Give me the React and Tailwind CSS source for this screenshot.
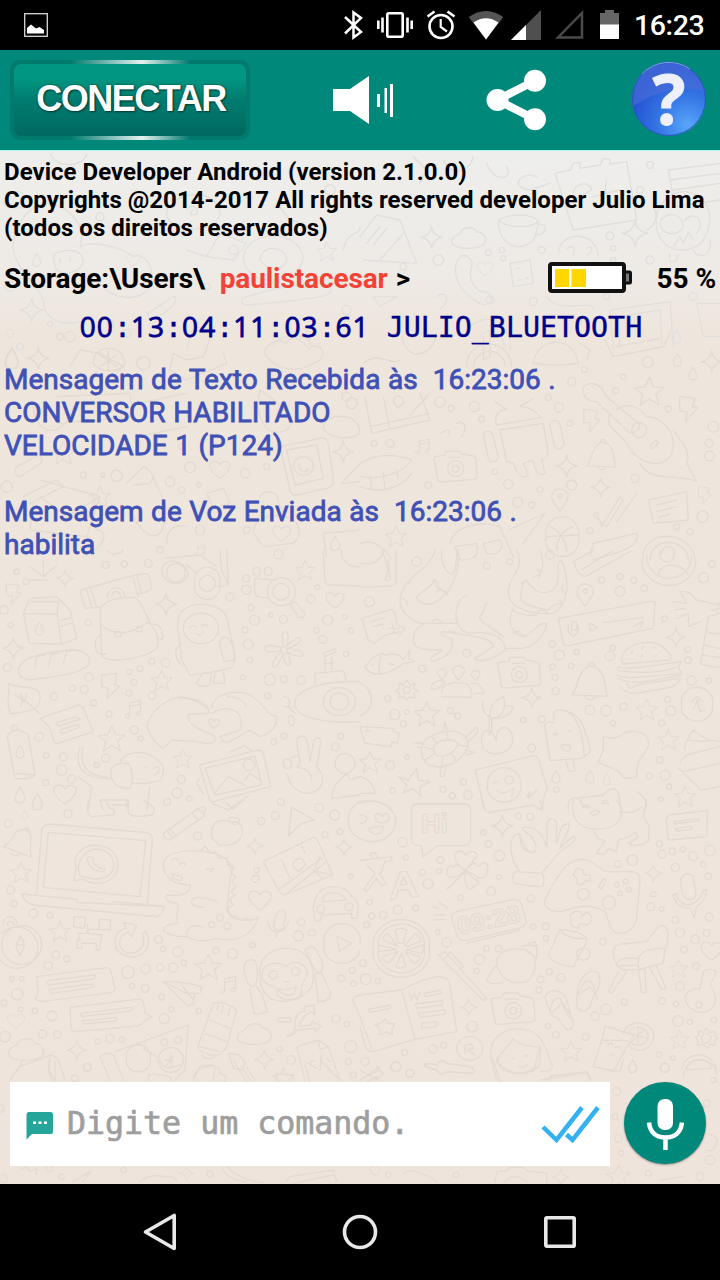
const STAR = 'M0-40L12-13L40-12L18 7L27 36L0 20L-25 37L-18 8L-40-10L-12-13Z'
const SPARK = 'M0-32Q3-5 32 0Q5 4 0 32Q-4 5-32 0Q-4-4 0-32Z'
const HEART = 'M0 30C-20 16-36 2-34-14C-30-32-6-30 0-14C8-32 34-28 34-10C32 6 16 18 0 30Z'
const CLOUD = 'M-50 14C-50-6-36-8-26-14C-18-38 20-36 26-18C50-20 56 6 48 16C30 34-34 36-50 14Z'
const DROP = 'M0-24C12-6 16 2 15 12C12 28-12 28-15 12C-16 2-10-8 0-24Z'
const BOLT = 'M-26-36L20-30L12-4L28-2L-8 40L-4 10L-26 8Z'
const NOTE = 'M-12 22V-18L24-26V14M-12-6L24-14M-12 22C-20 12-32 24-24 30C-18 32-12 28-12 22M24 14C16 6 4 16 12 22C18 24 24 20 24 14'
const CAMERA = 'M-62-30L-34-34L-28-46H14L20-38L54-32Q60-30 60-22L64 28Q64 36 56 38L-44 46Q-52 46-54 38L-64-20Q-66-28-62-30ZM24 6A24 24 0 1 1-24 6A24 24 0 1 1 24 6M10 6A10 10 0 1 1-10 6A10 10 0 1 1 10 6M-22-28H14'
const BELL = 'M-50 36C-30 16-36-30 0-42C36-44 40-4 46 40L-50 36ZM-14 40C-8 52 10 52 14 40M-4-44A8 8 0 1 1 12-44'
const PIN = 'M0 34C-20 8-30-4-22-22C-12-38 16-36 24-18C28-2 14 10 0 34ZM6-12A6 6 0 1 1-6-12A6 6 0 1 1 6-12'

// Each tile is a 360px wide piece of the wallpaper, drawn at 3 units per pixel.
const TILES = [
  {
    x: 0, y: 150,
    paths: [
      'M150 10C170 60 250 50 260 12M50 330C20 280 60 180 130 160C210 160 260 230 240 290C280 270 360 290 400 320C450 300 480 400 430 430C380 460 320 430 300 400',
      'M50 330C70 380 110 400 130 450C130 500 170 530 240 515',
      'M160 320C160 300 240 290 245 320C270 360 180 390 165 350ZM180 325V340M210 320V335',
      'M500 200C490 130 650 100 660 190C660 240 530 260 500 200ZM560 180C570 160 600 170 590 190C575 200 565 190 580 180',
      'M560 300L620 320L660 250L740 280L700 330L620 320M730 330C730 240 890 230 910 320C900 410 750 420 730 330ZM780 325C790 280 860 290 860 330C850 370 790 360 780 325Z',
      'M740 440C780 430 820 410 960 400C1000 400 1010 430 960 440C880 455 810 460 740 465C720 465 720 445 740 440Z',
      'M1030 300C1040 240 1080 260 1080 230M440 490C470 480 520 430 525 440C535 460 490 500 450 505ZM840 170C880 240 900 200 920 230',
      'M560 600C580 530 570 520 640 540M820 590C850 540 900 560 930 600M840 570L820 520M870 560L870 510M900 570L930 530',
    ],
    marks: [[STAR, 980, 305, 0.75], [SPARK, 95, 480, 1.1], [HEART, 400, 330, 0.6], [CLOUD, 50, 150, 0.8], [DROP, 110, 330, 0.8]],
    dots: [[30, 410, 14], [60, 590, 10], [150, 522, 8], [30, 550, 12], [330, 520, 10], [700, 300, 14], [700, 70, 10], [480, 380, 10], [300, 200, 12], [210, 560, 16], [990, 120, 16], [380, 550, 12], [620, 410, 10], [1040, 480, 14]],
  },
  {
    x: 360, y: 150,
    paths: [
      'M0 260L50 195L120 210L170 340L10 330M20 280L60 230M40 285L80 235M60 330L130 250',
      'M415 210C450 190 520 190 535 215C530 260 520 290 470 290C430 280 415 250 415 210ZM535 225C560 215 570 250 530 255M415 210C440 235 510 235 535 215',
      'M585 70L630 60L640 40L660 38V55L720 45L730 25L750 28V42L800 35L830 210L640 240ZM640 130C640 100 690 90 695 120L640 150M740 90L730 150M700 140L780 120',
      'M925 60L1080 40M930 90L1080 70M940 120L1080 100M925 60L945 170L1080 150',
      'M890 230C880 160 940 110 1000 130C1060 160 1060 220 1030 270C990 320 900 310 890 230ZM900 215C920 180 970 190 970 230C960 260 900 260 900 215ZM975 210C1000 180 1040 210 1010 250M940 290L960 260L970 280L985 245L1000 270',
      'M595 310C600 240 710 240 715 320M620 300C630 280 650 290 640 315M680 295C700 280 700 310 680 315',
      'M300 320C270 360 290 430 370 465C400 460 400 440 380 425C350 430 320 390 335 350C340 325 315 310 300 320Z',
      'M450 340L510 330L520 400L460 410ZM470 355H480M495 385H505M475 390H485M760 600L750 480L930 455L940 590M780 590L775 500L900 480L905 580M1080 460L1010 460L1030 560L1080 560',
      'M40 440L110 440L60 470ZM230 440C250 420 280 440 240 480M380 40C400 100 460 90 440 50M160 20L200 60L180 100M250 30C270 80 330 70 340 20M530 80C490 60 440 110 510 120L570 100',
      'M330 530C390 480 460 520 450 600M360 560C400 520 440 560 430 600M880 170C900 200 880 230 860 240M560 440C600 500 700 440 700 480M930 310C920 350 950 340 955 315M1000 300C1010 330 1060 320 1050 270',
    ],
    marks: [[SPARK, 825, 250, 1.2], [SPARK, 215, 262, 1], [HEART, 375, 355, 0.7], [CLOUD, 325, 265, 1], [DROP, 950, 560, 0.8], [STAR, 640, 520, 0.7]],
    dots: [[235, 330, 16], [130, 350, 10], [385, 308, 9], [425, 300, 8], [430, 325, 8], [545, 300, 10], [750, 258, 12], [760, 295, 8], [870, 45, 10], [840, 120, 10], [390, 450, 12], [760, 330, 8], [1000, 440, 12], [740, 440, 9], [520, 455, 12], [870, 330, 12], [310, 160, 10]],
  },
  {
    x: 0, y: 330,
    paths: [
      'M210 110L240 60L300 70L370 110L350 130M280 100C280 40 370 40 375 100C360 130 300 130 280 100ZM325 60V120M300 75L350 110M300 110L350 75',
      'M640 0L610 80L560 90L520 70L510 120L560 150L680 100L670 70M800 80C780 50 830 20 860 40C870 10 940 10 930 50C980 40 980 90 940 100C900 130 830 120 800 80Z',
      'M50 410L115 375C130 380 130 395 115 405L60 440C45 440 40 420 50 410ZM70 500L170 450L190 470L90 520M100 520L90 600L260 620L300 500L120 450M120 500L200 560L300 500',
      'M840 350L960 325Q980 320 985 340L1000 450Q1000 470 980 475L890 495Q875 500 870 480ZM860 360L950 345L970 445L885 465ZM880 410C880 370 940 370 940 410C935 445 890 445 880 410ZM895 400C900 430 920 430 925 415',
      'M380 460L430 410C450 420 470 440 450 460L400 465M460 440C480 500 510 510 490 590C470 650 420 600 400 560M620 490L670 475L690 520L640 535ZM500 640C500 600 520 580 560 590',
      'M170 200L390 190L400 260L180 280M410 220L560 190M410 320L560 290M100 230C110 330 200 320 220 230M780 180C760 260 800 330 860 300C900 270 840 220 780 180Z',
      'M970 290C970 250 1080 240 1080 310C1060 330 980 330 970 290ZM1025 460L1080 400M1025 460L1080 455M760 610C760 570 800 550 850 560C900 560 910 620 880 640L790 650ZM980 680L970 610L1080 600M250 680C330 640 320 600 290 600',
      'M780 500C790 480 830 480 835 510C830 530 860 540 850 560',
    ],
    marks: [[SPARK, 115, 85, 1], [DROP, 35, 85, 1.3], [HEART, 660, 418, 0.9], [SPARK, 1030, 365, 1], [STAR, 190, 370, 0.9], [STAR, 300, 500, 0.8], [HEART, 845, 610, 0.8], [DROP, 1005, 640, 0.9], [NOTE, 600, 660, 0.6]],
    dots: [[350, 437, 17], [308, 435, 6], [250, 435, 9], [570, 412, 16], [510, 455, 14], [598, 465, 7], [20, 470, 17], [545, 480, 10], [735, 430, 14], [740, 370, 10], [800, 410, 9], [545, 350, 9], [600, 600, 14], [430, 100, 20], [480, 660, 10], [1040, 200, 14], [180, 20, 10], [740, 600, 10], [1055, 220, 17]],
  },
  {
    x: 360, y: 330,
    paths: [
      'M125 20C140 100 220 80 230 10M10 100C60 60 90 110 120 90M320 110C320 20 450 20 455 110M340 110C345 50 430 50 435 105M370 20V90L390 80V10M520 100C530 20 640 10 655 100Q590 110 520 100M660 40L690 60L680 90',
      'M735 30L760 80L910 50L930 10M770 50L900 25M15 200L35 310L210 270L180 190M30 290L210 250M70 200L90 300M150 255L205 195M100 215C100 190 135 195 130 220L115 235Z',
      'M410 285C400 250 420 240 440 238L405 215M540 260C520 235 500 230 480 230L520 205M410 285L545 262M420 300L550 280L565 370Q560 385 545 390L555 430C540 440 525 430 520 390L490 400L505 435C490 450 475 440 460 400L440 395ZM370 310C385 295 400 310 400 320L415 380C410 400 390 400 385 385ZM568 280C580 265 595 270 600 285L612 340C605 365 590 360 583 345Z',
      'M670 190C660 160 700 150 725 175L740 200L835 280C850 290 820 320 805 305L710 215C690 215 675 205 670 190ZM770 240C790 220 830 220 860 260C920 260 960 330 930 380C900 420 830 400 800 340C780 310 730 290 750 250M860 300A22 22 0 1 1 815 300A22 22 0 1 1 860 300M870 345L890 330L895 340L875 358ZM840 400C870 460 960 430 1010 455L980 400C1000 360 940 310 940 300',
      'M0 400C50 370 100 370 155 390C130 430 60 450 0 440M0 470C50 490 120 480 155 430M30 440L35 480M70 430L75 480M110 420L115 450',
      'M865 510L980 485L985 570L880 580ZM890 525L950 510M890 545L950 530M895 562L930 552M725 590L780 500L790 510L740 590L700 555L710 545ZM770 575L830 490',
      'M558 620A50 50 0 1 1 656 620A50 50 0 1 1 558 620M570 590C600 600 620 640 620 665M640 590C600 600 590 640 590 660M560 620L655 615M690 680L700 640L830 610C840 630 820 650 780 665L700 690M850 690C840 590 1000 600 1005 690M870 690C870 620 980 620 985 690M905 670A20 20 0 1 1 945 670',
      'M270 640C280 590 360 570 420 590L460 680M285 650L350 640C360 680 340 690 300 690ZM370 640L420 630C440 660 400 680 380 670ZM445 600L555 550L490 640M0 640C60 620 100 690 90 690M240 310C260 300 270 290 268 320M290 280C310 270 325 290 305 320',
    ],
    marks: [[STAR, 868, 185, 1.1], [SPARK, 620, 408, 1], [SPARK, 722, 472, 0.9], [BOLT, 695, 270, 0.9], [BOLT, 985, 235, 1], [CAMERA, 287, 410, 1], [NOTE, 188, 348, 0.8], [PIN, 600, 510, 1], [DROP, 952, 90, 0.8], [DROP, 998, 130, 0.8], [BELL, 725, 375, 0.9], [BOLT, 1035, 495, 0.7], [STAR, 108, 620, 0.8], [SPARK, 1055, 95, 1]],
    dots: [[240, 215, 16], [273, 235, 9], [343, 230, 15], [365, 267, 9], [445, 463, 14], [540, 478, 9], [635, 465, 15], [597, 232, 14], [565, 203, 9], [90, 340, 12], [42, 340, 9], [205, 466, 10], [635, 155, 12], [863, 97, 16], [790, 140, 8], [925, 237, 9], [1047, 340, 12], [1048, 378, 15], [1060, 290, 16], [825, 445, 12], [473, 517, 15], [515, 525, 9], [1028, 560, 17], [950, 590, 9], [990, 605, 9], [690, 602, 9], [630, 280, 8], [405, 425, 8], [767, 183, 9], [674, 118, 9]],
  },
  {
    x: 0, y: 550,
    paths: [
      'M70 190L90 145L170 140L210 180L230 265L185 282L88 280ZM90 155H175M70 190L172 192L185 282M172 192L175 150M183 210L212 203M185 228L214 220',
      'M242 120L400 76L438 70Q450 75 455 115Q450 125 415 132M242 120Q245 150 258 175L300 172M258 112L275 172M270 110L290 170M398 78L415 140M410 74L425 128M322 140C325 105 370 105 375 138M335 138C338 120 358 120 362 138',
      'M305 320L300 180C310 150 360 140 405 142C430 160 440 210 470 250C490 300 450 310 420 320C380 330 330 335 305 320ZM305 225C330 250 380 265 445 215M345 245H362V260H345ZM410 230H425V245H410ZM445 220L475 225Q490 240 488 268L470 265M305 255Q280 260 288 300Q300 320 318 310',
      'M55 360C60 320 130 310 200 300C250 295 280 320 265 345C240 375 150 380 90 390C60 385 55 375 55 360ZM105 355L110 320L135 315M145 350L155 312L175 310M190 340L200 305L220 302',
      'M485 60C490 20 550 25 565 70C555 115 490 110 485 60ZM500 68A28 28 0 1 0 556 68A28 28 0 1 0 500 68M585 100A38 38 0 1 1 658 100A38 38 0 1 1 585 100M598 100A24 24 0 1 1 646 100A24 24 0 1 1 598 100M495 25L600 15L650 50M660 0L665 60L685 105L650 110M680 0L685 105M560 45L590 70',
      'M765 85L830 90M770 140L810 145M765 85C760 110 765 130 770 140M802 125A42 42 0 1 1 886 125A42 42 0 1 1 802 125M818 125A25 25 0 1 1 868 125A25 25 0 1 1 818 125M870 165L885 155L915 190C915 205 905 205 895 200Z',
      'M730 80C740 65 755 80 745 95C725 95 725 90 730 80ZM762 55C780 45 785 65 775 80C760 75 755 65 762 55ZM795 55C810 45 825 60 812 75C795 80 790 70 795 55ZM727 110C740 100 760 110 750 130C730 140 720 120 727 110Z',
      'M545 330C540 270 520 200 550 180C590 150 660 160 680 200C690 260 710 300 700 350C650 370 600 370 570 375ZM550 235A53 46 0 1 1 656 235A53 46 0 1 1 550 235M568 235Q580 220 590 232M605 228Q615 218 625 230M588 250Q602 262 610 245M658 280C665 250 690 260 698 290L708 330L672 335ZM545 280C525 290 525 310 532 330L550 350M605 375L590 400Q600 415 630 405L635 370M645 368L640 400L675 400L670 365',
      'M852 290C830 230 880 230 860 290C900 240 930 270 865 295C930 300 920 340 860 305C890 360 850 360 850 310C830 370 790 360 845 302C780 320 770 270 845 293M862 300A10 10 0 1 1 842 300A10 10 0 1 1 862 300',
      'M25 400C60 420 120 400 120 440C120 490 80 480 35 492C15 470 30 440 25 400ZM45 435L85 460L118 490M60 430L70 450L60 470M80 430L75 450',
      'M120 505L235 465Q245 465 250 475L280 545L175 580Q165 580 160 570L148 530ZM168 518L230 500L240 508L175 528ZM180 540L235 523L240 532L185 550Z',
      'M305 375L350 370L345 405L360 408L320 445L325 415L305 410ZM22 560Q25 545 50 540Q75 545 85 555L105 675Q90 690 45 685ZM35 540L38 525L52 528L55 540M48 670L105 675',
      'M440 530C450 480 500 450 540 440C600 450 630 460 625 490L570 492C550 510 590 540 640 555C660 580 630 585 590 575L515 570L490 595Q460 580 440 530ZM635 475C640 430 700 420 740 430C800 460 790 490 830 500C830 530 810 550 780 560L750 540L690 575Q665 580 660 560L720 540C740 480 680 460 635 490M540 445C570 440 600 460 625 475M680 440C710 440 730 450 740 470',
      'M625 515C630 500 640 510 642 515C650 500 665 512 655 525L640 535Z',
      'M885 465C880 430 940 390 1080 395M885 465C890 510 1000 520 1080 515M945 405L945 370L1030 362L1040 395M970 310L1005 295L1008 305L975 320ZM975 325V362M995 320V360M972 340H998M970 455A48 42 0 1 1 1066 455A48 42 0 1 1 970 455M990 455A28 26 0 1 1 1046 455A28 26 0 1 1 990 455M850 440C870 440 875 460 862 470L885 490M850 470H880M865 505C870 480 890 510 880 525C870 530 865 520 865 505',
      'M240 590C220 650 250 690 335 685M250 590C235 640 260 680 320 680M335 685C325 640 350 640 385 640C400 660 400 700 390 715C350 715 340 700 335 685ZM360 640C370 600 440 600 465 625C490 640 500 660 480 690C450 705 410 700 395 700M435 650H442M460 655L475 650L478 665L465 675M235 680L275 710L265 780M450 710L440 780M300 750L310 780M380 745V780M300 750H380',
      'M598 645L775 600Q785 600 790 610L812 710L640 755Q630 755 628 745ZM615 655L765 618L785 705L645 735ZM645 728L685 680L740 708M735 690L750 670L780 690M730 645A17 17 0 1 1 765 645A17 17 0 1 1 730 645M690 605L735 588L755 602M598 685L590 700L610 730M680 760L700 778L745 735',
      'M900 640C895 600 880 560 905 558C925 560 925 590 930 635L940 580C945 555 965 560 962 580L950 650C980 680 970 720 930 730C880 730 870 700 860 670M850 640C840 620 880 620 875 650C860 660 850 655 850 640ZM875 625C900 600 910 640 890 650M890 650C910 660 930 650 935 690',
      'M1005 640A30 30 0 1 1 1065 640A30 30 0 1 1 1005 640M995 745C1000 700 1020 690 1040 670L1050 690L1080 680M995 745L1080 735M970 0L975 90Q975 105 990 105L1080 108M1025 0C1020 30 1050 55 1080 50M320 0Q345 25 370 0M90 50L130 80L170 45M90 90H145M130 30V80',
    ],
    marks: [[SPARK, 195, 85, 0.8], [SPARK, 498, 163, 1], [SPARK, 40, 295, 1], [STAR, 485, 393, 0.8], [STAR, 335, 567, 1], [STAR, 548, 627, 0.75], [STAR, 915, 62, 0.75], [HEART, 1005, 150, 0.8], [HEART, 195, 732, 1], [DROP, 60, 735, 1], [DROP, 112, 755, 1], [DROP, 118, 235, 0.8], [DROP, 60, 605, 0.8], [BOLT, 40, 130, 0.8], [NOTE, 400, 475, 0.9]],
    dots: [[445, 40, 12], [373, 42, 9], [317, 45, 10], [50, 65, 8], [78, 95, 9], [12, 180, 13], [32, 225, 8], [265, 218, 9], [497, 338, 13], [455, 334, 9], [420, 356, 9], [387, 366, 8], [402, 397, 9], [387, 430, 9], [456, 436, 11], [267, 382, 13], [253, 418, 12], [217, 415, 9], [162, 440, 11], [22, 353, 12], [281, 459, 9], [327, 492, 9], [403, 540, 12], [118, 560, 13], [190, 621, 12], [185, 660, 16], [215, 687, 12], [138, 616, 8], [137, 698, 9], [317, 624, 12], [290, 645, 8], [422, 566, 8], [544, 688, 12], [531, 729, 15], [502, 755, 10], [568, 746, 8], [690, 141, 12], [753, 173, 9], [763, 211, 15], [735, 240, 9], [745, 284, 15], [750, 330, 8], [850, 208, 12], [812, 195, 6], [932, 147, 12], [952, 112, 7], [983, 211, 15], [968, 268, 12], [950, 241, 8], [1053, 242, 8], [1035, 200, 7], [1038, 312, 8], [809, 389, 17], [851, 388, 10], [903, 391, 13], [803, 437, 9], [851, 558, 9], [821, 576, 9], [1022, 558, 9], [1006, 590, 12], [842, 755, 10], [836, 12, 14], [728, 382, 7]],
  },
  {
    x: 360, y: 550,
    paths: [
      'M225 0C210 60 150 70 135 110C100 160 130 200 180 220L290 220M295 0C300 60 280 130 220 160C190 170 170 150 170 140L225 95M245 0C240 50 265 75 280 70C290 50 290 20 290 0M135 105L155 95M125 145Q145 150 140 165M215 95Q235 80 230 110L265 135Q240 110 230 125M320 135C280 150 270 240 330 250C400 240 440 270 435 300C400 330 350 340 345 325L400 290C390 255 320 260 260 245C230 240 240 260 275 265C280 300 270 320 215 335C200 320 240 310 245 300C200 300 160 300 160 270C160 230 190 225 190 225M380 155L365 195Q350 200 370 218L430 260M405 240Q420 240 415 265M215 215Q235 200 245 218M255 250Q275 235 290 250',
      'M470 0C500 60 440 80 445 130C450 180 520 195 580 190C640 150 620 70 605 30C580 40 610 90 580 120C540 140 520 120 500 90C480 100 490 120 480 140C490 170 540 175 565 180C590 150 620 170 600 150M540 0C560 60 540 80 520 80M485 100Q500 85 510 105M530 60Q550 65 535 85M530 190Q540 170 565 190M610 105Q595 120 620 130M460 175C440 210 450 250 490 260C540 240 520 220 560 220C560 250 520 290 490 295L435 295M455 180Q490 200 530 195M460 250Q475 235 490 260',
      'M595 205L870 155L885 155L880 235L625 287Q612 287 608 275ZM625 225V245L640 260L655 245V225M635 215H650V240H635ZM688 218L712 232L690 243ZM730 218L850 202M820 230L850 215L840 235',
      'M640 35L700 0M675 80L810 5M640 35L655 70L675 80M665 60L760 0M845 30A80 75 0 0 0 1008 30M860 15A65 65 0 0 0 995 20M895 80C890 40 960 30 985 75M900 0C890 40 940 50 943 10',
      'M940 155L980 160L960 125C990 120 1000 140 1010 150L1080 165M945 180L975 175M950 205L985 190L985 230L1020 215M1055 180L1080 175M1045 200L1080 190M1045 200L1022 340Q1040 350 1080 352M1040 245Q1060 255 1080 250M1030 285L1080 295M1025 315L1080 322M1080 155L1070 185',
      'M785 335C780 290 840 270 890 280C920 295 940 320 930 330L790 342ZM775 350C800 360 850 350 965 335L955 350C900 370 830 370 775 362ZM770 375C800 390 850 380 965 370L955 350M775 385C830 410 880 390 965 375M780 410Q790 430 830 430L930 412Q960 400 960 385M800 400Q810 425 830 405L955 385M815 310L818 300M845 300L850 290M840 320L848 316M880 295L885 290M885 320L890 315',
      'M15 350C30 330 60 300 75 315C100 310 120 310 130 330L150 300L145 325L165 335L130 340C110 360 70 375 50 372Q25 370 15 350ZM70 310Q50 340 60 370M85 340L100 345M35 345H42M5 205L95 178Q100 180 105 190L112 225L135 235L120 255M5 205L25 270L45 280L75 255L120 245M35 215L75 202M40 230L70 222M85 235L120 235M95 220L105 250',
      'M245 430C240 400 290 390 325 405Q340 430 335 442L245 440M278 365C275 345 310 340 315 365Q305 380 295 390Q285 380 278 365ZM232 370A14 14 0 1 1 260 370L245 390ZM333 375A13 13 0 1 1 360 375L347 392ZM215 405Q230 385 255 395Q240 420 215 418ZM335 400Q360 395 372 430L345 430',
      'M140 390L150 405L165 400L160 415L175 422L160 430L165 445L150 440L140 450L130 440L115 445L120 430L105 422L120 415L115 400L130 405ZM150 420A10 10 0 1 1 130 420A10 10 0 1 1 150 420',
      'M370 450C360 480 380 500 400 505C430 500 440 470 430 440C410 450 390 460 390 500M430 470Q450 465 460 470Q455 500 405 505M388 505V555M395 505V550M365 580C360 540 390 520 410 575C400 520 460 520 458 570C455 610 400 625 370 595Z',
      'M185 610C175 560 240 540 290 545C340 560 330 610 280 640C230 660 190 650 185 610ZM220 600C220 570 270 560 295 580C290 610 230 640 220 600ZM260 545L265 570M215 560L230 580M185 590L218 598M325 590L295 585M245 655L248 625M290 635L275 610M195 630L225 610M250 540L255 515L262 542M240 650L242 680H252L258 652M315 565L350 530Q358 540 350 550L325 575M160 578L195 582M170 590L185 595M320 600L345 608L320 615',
      'M555 535C550 520 565 510 580 520C590 500 570 490 590 480C660 480 670 520 692 600C690 610 680 615 665 625L570 632ZM620 482C660 510 670 560 672 620M580 550L592 552L582 558M625 545L635 540M603 585H630Q635 600 620 605Q605 600 603 585ZM618 635L625 660Q635 670 645 660L640 630',
      'M730 560C760 570 780 560 800 545C850 540 870 560 865 590C850 620 830 620 830 680Q800 690 790 680C770 650 740 655 715 635L730 600Z',
      'M345 660L520 617Q530 617 535 627L562 715L548 750V780M345 660L375 780M383 705A50 45 0 1 1 482 705A50 45 0 1 1 383 705M400 700Q410 690 418 700M435 690A12 12 0 1 1 460 690A12 12 0 1 1 435 690M410 720Q430 740 460 715L455 740M500 740L510 725L505 745L530 720',
      'M0 530L100 535V545L118 550L112 580L95 575V590L15 580ZM18 545A5 5 0 1 1 28 545M0 400A45 50 0 0 1 0 497M0 680Q40 690 45 730H0M155 780Q155 765 170 763H320Q330 765 332 780M0 760Q60 740 95 780M0 40Q60 50 70 0M0 112L95 108Q108 105 108 90V0M70 10L85 60L75 90Q90 95 90 85L85 30',
      'M965 463A47 42 0 1 1 1057 463A47 42 0 1 1 965 463M995 455L1010 440L1030 455M1000 480L1012 450L1020 485L1035 480M975 600C970 580 1000 540 1000 540C1020 560 1040 560 1040 570L1080 575M960 640C970 610 1000 610 1080 590M955 655L970 665L1080 640M970 670L1025 720L1080 710M985 570L1040 575',
      'M625 780Q620 740 650 745Q690 740 730 735Q760 700 775 730L785 780M660 750Q670 780 690 770M730 760H745M830 725Q870 750 855 780M115 680L145 690L170 655L175 690L210 695L180 710L182 740L160 715L130 730L140 705Z',
    ],
    marks: [[STAR, 200, 493, 0.95], [SPARK, 515, 443, 0.9], [CAMERA, 478, 368, 1], [PIN, 676, 135, 1], [BELL, 690, 395, 1.1], [STAR, 860, 480, 0.8], [STAR, 925, 570, 0.8], [STAR, 30, 637, 0.8], [STAR, 975, 740, 0.8], [SPARK, 948, 262, 0.9], [DROP, 690, 680, 0.8], [DROP, 740, 688, 0.7], [DROP, 588, 680, 0.8]],
    dots: [[170, 35, 14], [28, 155, 15], [187, 356, 10], [83, 445, 9], [105, 494, 15], [130, 521, 9], [140, 486, 7], [271, 482, 9], [293, 498, 9], [90, 646, 13], [141, 622, 7], [310, 696, 9], [324, 735, 13], [277, 737, 9], [249, 718, 9], [98, 722, 8], [570, 15, 13], [380, 47, 10], [449, 35, 9], [725, 90, 9], [780, 80, 9], [821, 91, 9], [853, 115, 10], [780, 124, 15], [1030, 83, 15], [1056, 41, 10], [577, 281, 10], [598, 315, 15], [578, 350, 8], [633, 348, 8], [585, 382, 9], [587, 423, 11], [545, 508, 10], [515, 594, 12], [490, 510, 8], [750, 318, 14], [758, 293, 8], [690, 480, 14], [738, 482, 16], [791, 470, 11], [759, 520, 8], [932, 482, 15], [905, 519, 9], [923, 448, 9], [983, 298, 9], [985, 331, 10], [995, 392, 14], [1047, 392, 8], [899, 630, 10], [915, 676, 15], [868, 678, 9], [927, 710, 8], [903, 748, 7], [320, 310, 12], [590, 719, 8], [914, 206, 8], [650, 306, 8]],
  },
  {
    x: 0, y: 800,
    paths: [
      'M110 280L125 90Q130 72 150 72L440 98Q458 102 457 118L442 310M130 262L145 97L437 122L420 290ZM65 282L230 298L235 308L335 312L492 320Q490 345 470 350L100 315Q70 305 65 282ZM335 305L490 318',
      'M222 242L228 205C215 160 255 130 300 137C350 145 365 190 345 225C325 255 275 255 250 238ZM240 228C225 190 250 150 290 147C330 150 350 180 338 212C320 245 280 240 240 228M262 175Q270 165 278 175L280 190L300 205L315 205Q315 218 300 215Q262 205 262 175Z',
      'M10 140C50 120 30 90 75 88C110 100 80 140 95 172ZM35 160Q45 172 60 162M70 88Q80 78 90 90',
      'M490 100L595 25L615 20Q620 25 610 50L510 120Q490 118 490 100ZM510 88L530 110M500 92L518 115M575 38L595 60M590 25L612 42',
      'M635 95C640 55 670 60 690 65C730 60 735 100 720 115C700 140 680 135 660 135C640 120 630 110 635 95ZM685 65C685 50 700 48 718 58C718 75 700 78 697 70',
      'M865 108L875 22L942 60L905 70ZM790 185L940 112Q950 112 955 125L998 225L855 285Q845 285 835 270ZM835 270L965 175M855 285L975 188M940 212L998 225M905 135L915 160M845 180L870 235M880 200A18 18 0 1 1 915 195L895 215ZM945 205L960 170M965 235L940 210',
      'M490 195C490 150 580 145 640 160C690 170 700 200 690 240L680 330C690 360 740 370 775 352C760 400 720 430 650 415C600 430 560 420 558 400C570 370 600 375 612 385M490 195C490 230 520 255 572 255C570 280 550 290 500 285Q490 305 530 310C545 320 520 350 535 370C510 370 490 380 490 390C510 410 540 410 560 410M655 310C630 290 580 290 575 300Q570 320 612 322M600 155L615 138L632 160L645 155L660 175L680 172L682 195L700 200L695 220L708 230L695 245L708 260L692 275L705 285L688 300L700 315L682 325L692 345L712 350L720 362L740 355L752 362L775 352M515 185A5 5 0 1 1 535 185M540 195A5 5 0 1 1 555 195M518 222L545 230Q550 240 540 242L518 235ZM618 208L640 205L632 215',
      'M950 290C960 250 1040 250 1055 290C1080 300 1075 330 1070 355H1055V340L965 345L960 365L945 362C945 340 930 320 950 290ZM965 305C970 270 1020 270 1040 300ZM950 328A12 12 0 1 1 974 328A12 12 0 1 1 950 328M1035 320A12 12 0 1 1 1059 320A12 12 0 1 1 1035 320',
      'M828 345Q845 320 858 340L850 385Q835 400 820 380ZM803 365Q810 400 840 395Q865 385 865 360M832 395L828 412M972 430A55 50 0 1 1 1080 430M972 430A55 50 0 0 0 1080 450M1010 408L1055 430L1018 455Z',
      'M5 435A60 58 0 1 1 125 435A60 58 0 1 1 5 435M0 480A63 62 0 1 0 5 400M62 408L75 435L60 468L48 438ZM48 435H75M10 370A20 20 0 1 1 50 370M22 375A10 10 0 1 1 42 375',
      'M222 350L257 352L252 385L220 380ZM298 358L332 360L330 390L296 388ZM262 372V400H235L240 420H232V445H245V430H290L288 450H300L305 405L265 400V388H296',
      'M345 425C345 395 365 385 380 385L370 368L410 375L395 410L385 395C350 410 350 450 385 460C430 460 440 420 425 400L438 395C460 440 430 475 390 470C360 465 345 450 345 425Z',
      'M110 530L320 503Q330 503 333 515L345 565Q345 575 335 578L125 605L105 598Q118 580 112 560ZM145 542L285 525Q290 535 280 537L145 555Q135 550 145 542ZM150 568L275 552Q285 560 275 563L155 580Q145 575 150 568Z',
      'M210 622L420 597Q430 600 432 615L435 640L455 650L430 665Q425 675 410 678L225 695Q215 695 213 680ZM240 640L395 622Q400 630 390 633L245 650ZM245 663L350 652Q355 660 345 663L250 672Z',
      'M490 545Q560 545 605 560L600 580L585 580L580 610L565 620ZM490 545L560 580L585 580M545 555L580 600',
      'M733 510C730 480 750 475 765 482C780 510 770 555 760 560Q740 560 733 510ZM750 565L762 640Q780 645 802 635L785 580L770 560M780 530C770 470 820 440 870 445C930 450 950 510 935 560C910 600 850 615 810 595C790 580 780 560 780 530ZM785 520C790 485 840 485 858 500C880 475 920 490 922 520C915 545 900 550 905 580C890 605 840 605 830 580C840 560 810 560 800 550Q785 545 785 520ZM808 525A12 12 0 1 1 832 525A12 12 0 1 1 808 525M875 515A12 12 0 1 1 899 515A12 12 0 1 1 875 515M835 565Q860 575 888 560Q885 590 860 585Q840 580 835 565ZM915 450Q930 435 945 445L965 480Q975 510 955 520L945 510ZM945 520L965 520L992 580Q990 605 955 605ZM850 545H868',
      'M595 735L640 610Q670 600 710 630L680 740Q660 775 630 765L595 750ZM628 660L690 685M615 700L680 725M600 740L655 755M655 612L650 632M670 618L665 638M690 625L685 645M605 760Q610 780 640 775',
      'M300 770Q320 750 340 765L370 840M300 770L330 840M345 755L565 675L555 810L525 840M380 775A36 33 0 1 1 450 775A36 33 0 1 1 380 775M475 780A37 37 0 1 1 550 780A37 37 0 1 1 475 780M495 780H520M510 760L515 800M500 795L520 768M430 745L470 770M445 840Q440 815 480 825Q510 825 515 840',
      'M835 655L870 652Q880 665 870 665L835 665ZM860 710Q890 700 885 670Q890 630 915 635L912 620L942 615L945 645L935 635Q900 650 900 680L935 675L935 665L965 678L945 695V685L890 690Q880 710 860 710',
      'M890 740L955 720L985 740L1020 840M890 740L915 840M955 720L960 748L985 740M945 780L925 790L950 805M965 765L960 810M980 775L990 785M685 760L720 765L735 790L725 810L700 805ZM725 800L750 840M740 800L765 840M1080 585Q1060 590 1058 600L1080 650',
      'M30 840L60 800L140 770M140 770Q160 760 175 780L195 840M150 775Q140 810 155 840M165 785V840M580 840L600 800Q640 790 645 800L640 840M830 840V820L880 825V840',
      'M265 0Q255 40 275 50L340 45Q350 25 330 25L315 0M335 15H385M385 0V40Q400 55 455 45Q470 30 455 18L430 0M635 10L685 30L720 5',
    ],
    marks: [[HEART, 780, 300, 1], [HEART, 48, 663, 0.75], [STAR, 63, 218, 0.8], [STAR, 180, 395, 0.8], [STAR, 625, 502, 1], [SPARK, 765, 138, 0.8], [SPARK, 1032, 142, 0.8], [SPARK, 230, 750, 0.9], [SPARK, 793, 778, 0.9], [NOTE, 685, 553, 0.9], [CLOUD, 762, 703, 1], [CLOUD, 77, 750, 1.05], [DROP, 73, 45, 0.6]],
    dots: [[25, 70, 12], [204, 41, 12], [32, 270, 12], [42, 311, 9], [100, 340, 13], [150, 346, 9], [593, 108, 12], [784, 63, 11], [826, 47, 12], [958, 23, 13], [1004, 45, 15], [975, 104, 9], [1020, 95, 9], [770, 210, 8], [767, 236, 11], [660, 353, 10], [635, 374, 9], [682, 378, 10], [903, 366, 11], [896, 408, 15], [936, 398, 10], [758, 435, 8], [698, 461, 15], [648, 452, 9], [534, 455, 15], [475, 418, 12], [489, 447, 8], [384, 517, 19], [437, 507, 14], [480, 502, 11], [519, 503, 14], [551, 488, 8], [435, 565, 12], [396, 558, 8], [485, 591, 9], [493, 656, 15], [596, 633, 8], [514, 628, 8], [168, 464, 11], [145, 497, 12], [200, 477, 9], [52, 583, 17], [12, 609, 9], [62, 628, 7], [104, 632, 8], [157, 648, 15], [128, 702, 12], [172, 704, 11], [15, 710, 16], [330, 716, 13], [366, 719, 8], [293, 724, 8], [493, 727, 10], [534, 720, 10], [262, 801, 11], [1008, 656, 12], [1040, 673, 8], [1052, 740, 18], [1023, 535, 10], [1057, 511, 9], [1060, 551, 8], [873, 780, 13], [839, 747, 8], [1045, 785, 9], [1052, 229, 7], [35, 536, 7], [65, 536, 7]],
  },
  {
    x: 360, y: 800,
    paths: [
      'M0 5C40-5 100 10 108 60C105 115 50 140 0 115M0 70C30 70 25 40 0 45M45 50C50 30 65 45 68 50C75 30 95 45 85 60Q70 75 50 65ZM25 85L70 78Q70 105 45 102Q30 98 25 85Z',
      'M0 5C-45 25-50 95 0 115',
      'M170 10H315Q332 12 332 28V118Q332 135 315 137H232L188 170L185 137H172Q155 135 155 118V28Q155 12 170 10Z',
      'M0 182L95 170V182L75 185L60 225L80 250L65 258L50 235L20 275L12 268L45 220L20 195M40 175L30 160L45 158L52 172M90 300L120 215H140L175 288L155 292L145 270H115L108 295ZM120 255L130 230L142 253Z',
      'M318 210C290 200 275 160 290 155C310 145 315 165 318 165C325 150 355 150 350 170ZM318 212C340 180 350 190 355 200C375 175 390 195 380 215C385 240 350 235 345 225ZM318 215C310 240 320 270 335 268C340 250 360 260 355 245ZM315 212C280 180 290 200 280 200C260 190 260 220 262 225C270 240 290 230 318 212M315 215L262 268',
      'M218 320L235 325M235 305L262 325M225 345L252 345M220 360L255 358M275 355Q275 340 290 335L460 298Q480 298 485 315L498 360Q500 375 485 382L325 420Q300 425 292 410ZM320 430L480 390',
      'M480 215C450 180 440 110 475 100L500 150C530 170 540 140 510 105C480 85 480 80 510 82C540 90 550 110 560 140C565 110 550 60 575 55C600 60 585 100 590 130C600 100 600 70 625 72C635 90 600 130 600 145L640 108C655 115 640 130 600 155L545 220M480 100C480 140 490 160 525 155M470 215L545 220Q555 225 550 255Q540 265 465 250Q455 245 460 220Z',
      'M40 445A85 75 0 1 1 208 445A85 75 0 1 1 40 445M55 445A70 63 0 1 1 193 445A70 63 0 1 1 55 445M115 430L105 390Q125 380 140 390L130 430ZM135 435L165 400Q185 410 180 425L140 440ZM140 450L190 435Q195 450 185 460ZM135 455L180 470Q175 490 160 490ZM125 460L138 500Q120 508 108 500ZM115 455L85 490Q65 480 65 470ZM110 448L55 455V435ZM112 438L68 420Q70 405 85 400Z',
      'M570 270C600 210 630 180 660 178C700 175 710 205 740 215C790 220 840 200 840 240L830 350C825 390 800 400 780 400C750 400 750 370 735 335C710 320 680 310 620 330C580 345 545 320 555 300ZM640 225L650 205L670 210L672 225H690L692 240L675 243L665 255L650 250L652 238ZM652 283A18 17 0 1 1 688 283A18 17 0 1 1 652 283M727 308A20 20 0 1 1 767 308A20 20 0 1 1 727 308M716 260L730 235L738 240L725 268ZM763 254A7 7 0 1 1 777 254A7 7 0 1 1 763 254M790 244A7 7 0 1 1 804 244A7 7 0 1 1 790 244M773 280A7 7 0 1 1 787 280A7 7 0 1 1 773 280M800 269A7 7 0 1 1 814 269A7 7 0 1 1 800 269',
      'M630 345C650 325 670 335 665 350L680 335C700 345 695 370 680 375L660 370L655 385L635 378ZM600 388L565 465Q580 495 640 500L678 430L680 415M600 388C630 390 670 400 680 415C650 420 610 410 600 388M650 460A20 18 0 1 1 690 465A20 18 0 1 1 650 460',
      'M410 490C410 450 460 440 500 450C540 470 530 520 500 545C460 555 420 540 410 490ZM485 440Q510 430 530 440V475Q520 465 500 455M505 430L525 425L530 440M410 500L400 505L380 540Q390 555 410 550L430 548M235 465L255 455L380 595L370 602ZM255 475L270 455L310 500L300 508',
      'M760 455Q765 430 790 432L860 425L895 380Q910 370 922 390Q928 430 915 445L910 490L830 510H790Q760 495 760 455ZM770 490Q780 470 835 475V495L770 498ZM835 495C830 450 870 445 910 445M835 495L840 510M775 515L745 575L755 580L800 515M835 510L845 578H858L855 505M870 505L905 570L918 565L890 500',
      'M925 45L1042 32L1040 110L925 120L918 60ZM942 65L1018 55V62L942 72ZM945 85L995 80V88L948 93ZM640 0C630 60 660 90 720 87C780 85 800 40 770 0M668 25A10 10 0 1 1 688 25M725 12A10 10 0 1 1 745 12M690 40Q705 25 720 35Q705 55 690 40M700 90Q710 120 735 122L710 160L735 162L745 145L770 155L775 120L810 110L825 95L835 112L805 130Q830 145 865 125L868 80L850 50L860 0M780 35Q820 45 845 20M365 0Q370 35 385 38L520 15L545 30L540 0',
      'M963 235Q980 210 1000 230L1008 285Q1000 305 975 295Q960 270 963 235ZM938 285Q950 325 990 325L1003 352L1010 320Q1040 300 1040 270L1030 270Q1020 310 980 315Q950 305 948 280Z',
      'M0 585L125 570Q180 540 230 530Q262 530 268 545L290 695L165 718L40 755Q20 755 15 735L0 680M125 570L165 718M0 650L35 745M25 628L90 615Q95 625 88 626L30 637ZM192 580L245 570V580L195 590ZM165 612L245 602Q252 612 245 615L170 625ZM175 640L255 630Q260 640 250 643L180 652ZM185 670L230 665Q235 678 225 680L185 685ZM148 580L155 600L163 580L172 600L180 575M75 655L85 670L105 672L95 685L98 705L80 695L60 705L58 685L45 675L65 670Z',
      'M555 590C570 560 610 570 620 600L640 670Q640 690 620 690L590 650Q575 660 555 590ZM570 635Q575 590 600 595L635 650M575 640L605 610L630 655M650 600C650 530 690 500 715 520C730 550 710 570 700 590L690 620Q665 645 650 620ZM655 580Q680 520 700 555L712 598M655 585L690 560L710 590',
      'M395 780C380 710 440 680 490 688C550 690 560 760 578 800Q575 815 540 815M395 780L410 840M415 790C410 760 440 750 460 715C480 740 520 740 540 740V790C530 830 430 830 415 790ZM415 770Q400 790 425 795M455 775H462M495 768H502M475 798Q490 805 502 795M540 740L520 815',
      'M735 678L820 705L760 815L700 800L725 720L805 722M725 720L735 678M790 700C800 660 870 655 882 705C880 750 830 765 805 735M805 700C815 675 860 675 865 710C860 735 830 745 810 725M835 680V735M810 700L860 715M815 725L850 690M745 735A6 6 0 1 1 757 735M765 745A6 6 0 1 1 777 745M750 768A6 6 0 1 1 762 768',
      'M290 745A38 35 0 1 1 368 745A38 35 0 1 1 290 745M315 760V735L335 732L340 745L325 750L345 765M195 800Q190 785 230 795Q245 770 262 790L330 800Q345 805 340 820L260 815Q240 830 230 810Z',
      'M1030 515Q1050 500 1070 515L1050 555Q1070 580 1065 610Q1050 645 1010 635Q975 620 975 590Q985 565 1020 565ZM1008 615A9 9 0 1 1 1026 615A9 9 0 1 1 1008 615M1038 685L1050 698L1065 695V708L1075 715L1065 722V735L1050 733L1040 745L1030 733L1012 735L1015 720L1005 712L1018 705L1015 692L1030 697ZM1025 715A14 14 0 1 1 1053 715A14 14 0 1 1 1025 715M965 810C970 750 1060 750 1070 810M980 810C985 770 1045 770 1055 805L980 810M570 840V828L680 815L690 840M0 810L50 840M0 840L60 800',
    ],
    marks: [[SPARK, 427, 78, 1], [SPARK, 880, 220, 0.8], [SPARK, 326, 622, 0.8], [STAR, 633, 755, 0.8], [STAR, 958, 720, 0.75], [STAR, 955, 507, 0.7], [CAMERA, 460, 626, 1.02], [HEART, 1055, 452, 0.95], [DROP, 818, 798, 0.8]],
    dots: [[128, 127, 14], [241, 180, 10], [237, 213, 8], [187, 217, 9], [204, 251, 15], [138, 172, 8], [418, 167, 16], [385, 131, 10], [370, 98, 8], [475, 48, 9], [511, 50, 10], [393, 274, 13], [302, 293, 8], [513, 295, 11], [416, 231, 7], [113, 330, 13], [167, 324, 9], [70, 345, 11], [35, 348, 9], [20, 375, 9], [28, 307, 8], [260, 427, 14], [233, 397, 7], [358, 478, 15], [380, 446, 8], [416, 446, 10], [350, 513, 8], [520, 380, 8], [557, 379, 10], [558, 415, 8], [17, 538, 16], [9, 489, 10], [53, 543, 8], [568, 515, 9], [603, 533, 12], [542, 538, 10], [537, 570, 9], [337, 680, 16], [219, 747, 12], [251, 736, 9], [134, 758, 9], [108, 800, 15], [150, 820, 12], [15, 785, 12], [564, 678, 8], [587, 704, 10], [677, 711, 10], [705, 649, 13], [738, 628, 16], [793, 606, 9], [729, 425, 10], [817, 181, 16], [773, 192, 10], [906, 162, 12], [898, 131, 9], [937, 154, 10], [968, 148, 8], [999, 168, 14], [1050, 151, 16], [946, 202, 12], [1045, 229, 10], [1030, 193, 8], [880, 283, 8], [872, 320, 12], [905, 327, 7], [946, 360, 10], [960, 398, 14], [1048, 351, 12], [1005, 418, 13], [1040, 399, 10], [972, 449, 10], [1009, 499, 10], [960, 559, 13], [948, 612, 8], [906, 603, 10], [954, 663, 16], [990, 666, 8], [1062, 660, 8], [897, 764, 8], [914, 803, 14], [938, 774, 7]],
  },
  {
    x: 0, y: 1060,
    paths: [
      'M30 60L70 0M150 0Q140 40 170 66M580 60Q580 30 620 20Q660 10 660 40Q690 50 670 66M700 0L740 66M915 15L930 66M960 0L1020 60M480 0Q490 40 550 10M860 365L870 350L1000 330L1010 365M880 370L1000 345M665 320Q680 360 740 365M680 320Q720 360 790 368M220 365L270 335L250 365M420 365Q440 340 500 350Q530 350 530 365M60 330L80 320L90 335L110 325V345',
    ],
    marks: [[SPARK, 560, 340, 0.7], [STAR, 850, 55, 0.8]],
    dots: [[262, 22, 12], [225, 55, 10], [630, 342, 9], [148, 325, 10], [185, 350, 8], [1060, 45, 9], [10, 355, 12], [0, 145, 12], [370, 330, 8]],
  },
  {
    x: 360, y: 1060,
    paths: [
      'M0 60L60 30L50 20L70 40L50 60V50L20 66M195 20Q190 5 230 15Q245-5 262 10L330 20Q345 25 340 40L260 35Q240 50 230 30ZM400 0L420 66M540 60L680 38Q690 40 690 60M430 20Q470 60 530 20M700 20L780 35L790 0M970 50C970-10 1060-20 1070 40M130 340Q150 325 180 340Q220 350 230 368M405 368L410 335L440 332L450 322H490L500 332L560 340V368M430 368Q465 330 500 368M1040 220Q1080 230 1070 250Q1060 280 1040 270M900 360L970 350',
    ],
    marks: [[SPARK, 603, 352, 0.8], [STAR, 775, 350, 0.9], [DROP, 818, 20, 0.8]],
    dots: [[108, 20, 14], [150, 40, 12], [915, 23, 13], [1040, 130, 10], [765, 170, 9], [775, 235, 12], [45, 330, 14], [85, 345, 8], [1020, 350, 12], [1060, 60, 8], [865, 340, 9], [770, 95, 12], [783, 280, 8], [1050, 300, 14], [288, 345, 8]],
  },
]

function Wallpaper() {
  return (
    <svg className="absolute inset-0 h-full w-full" viewBox="0 150 720 1034" fill="none">
      <defs>
        <linearGradient id="paper" x1="0" y1="0" x2="0" y2="1">
          <stop offset="0" stopColor="#eeeeec" />
          <stop offset="0.1" stopColor="#eeebe7" />
          <stop offset="0.18" stopColor="#eee6dd" />
          <stop offset="0.5" stopColor="#eee6dd" />
          <stop offset="1" stopColor="#efe4dc" />
        </linearGradient>
      </defs>
      <rect y="150" width="720" height="1034" fill="url(#paper)" />
      {TILES.map((tile) => (
        <g
          key={`${tile.x}-${tile.y}`}
          transform={`translate(${tile.x} ${tile.y}) scale(0.33333)`}
          stroke={tile.y < 330 ? '#e1dfdc' : '#e3dbd2'}
          strokeWidth="4"
          strokeLinejoin="round"
          strokeLinecap="round"
        >
          {tile.paths.map((d, i) => <path key={i} d={d} />)}
          {tile.marks.map(([d, x, y, s], i) => (
            <path key={i} d={d} transform={`translate(${x} ${y}) scale(${s})`} />
          ))}
          {tile.dots.map(([x, y, r], i) => <circle key={i} cx={x} cy={y} r={r} />)}
        </g>
      ))}
      <g fill="none" stroke="#e3dbd2" strokeWidth="1" fontFamily="Liberation Sans, sans-serif" fontWeight="bold">
        <text x="421" y="833" fontSize="27">Hi</text>
        <text x="459" y="935" fontSize="25" letterSpacing="0" transform="rotate(-12 459 935)">09:28</text>
      </g>
    </svg>
  )
}

function StatusBar() {
  return (
    <div className="flex h-[50px] items-center bg-black pr-[15px] pl-[24px] text-white">
      <svg className="h-6 w-6" viewBox="0 0 24 24">
        <rect x="0.7" y="0.7" width="22.6" height="22.6" fill="none" stroke="#d8d8d8" strokeWidth="1.3" />
        <path d="M3 20.500V15L7 11.500L12 15.500L15.500 14L20 17V20.500Z" fill="#fff" />
      </svg>
      <svg className="ml-auto h-[30px] w-5" viewBox="344 10 20 30" fill="none" stroke="#fff" strokeWidth="2.500">
        <path d="M345 17L361 32L353.500 37.500V12.500L361 18L345 33.500" />
      </svg>
      <svg className="ml-3 h-[30px] w-[38px]" viewBox="376 10 38 30" fill="none" stroke="#fff">
        <rect x="387.300" y="13.200" width="15.400" height="23.600" rx="1.500" strokeWidth="2.600" />
        <path d="M382.500 17.500V32.500M407.500 17.500V32.500M378.300 20.500V29M411.700 20.500V29" strokeWidth="2.600" />
      </svg>
      <svg className="ml-3 h-[30px] w-[30px]" viewBox="426 10 30 30" fill="none" stroke="#fff" strokeWidth="2.600">
        <circle cx="441" cy="26.500" r="11.500" />
        <path d="M440.700 19V27L447 31.500" strokeWidth="2.200" />
        <path d="M427.500 16.500L434.500 11.500M447.500 11.500L454.500 16.500" />
      </svg>
      <svg className="ml-3 h-[30px] w-9" viewBox="468 10 36 30">
        <path d="M486 39.500L468.700 17Q486 5 503.300 17Z" fill="#555" />
        <path d="M486 39.500L473.500 22.500Q486 14 498.500 22.500Z" fill="#fff" />
      </svg>
      <svg className="ml-[7px] h-[30px] w-[31px]" viewBox="511 10 31 30">
        <path d="M511 40L541 10V40Z" fill="#4f4f4f" />
        <path d="M511 40L526 25V40Z" fill="#fff" />
      </svg>
      <svg className="ml-[13px] h-[30px] w-[29px]" viewBox="555 10 29 30">
        <path d="M558 37.500L582 13V37.500Z" fill="none" stroke="#4a4a4a" strokeWidth="2.500" />
      </svg>
      <svg className="ml-4 h-[30px] w-5" viewBox="600 10 20 30">
        <path d="M600 13H605V10H614V13H619V25H600Z" fill="#666" />
        <path d="M600 24.500H619V39H600Z" fill="#fff" />
      </svg>
      <span className="ml-[14px] w-[71px] pt-[2px] text-[28.5px] leading-[48px] font-medium tracking-[-0.4px] whitespace-nowrap">16:23</span>
    </div>
  )
}

function Toolbar() {
  return (
    <header className="flex h-[100px] items-center bg-[#00897b] pl-[10px]">
      <button type="button" className="relative h-[80px] w-[240px] rounded-[10px] bg-[#007a6d] p-1">
        <span className="absolute top-0 left-[60px] h-[4px] w-[120px] bg-[linear-gradient(90deg,transparent,#ffffffe6_60%,transparent)]" />
        <span className="absolute bottom-0 left-[60px] h-[4px] w-[120px] bg-[linear-gradient(90deg,transparent,#ffffffe6_60%,transparent)]" />
        <span className="flex h-full items-center justify-center rounded-[7px] bg-linear-to-b from-[#009681] from-20% via-[#007c6f] via-50% to-[#006960] pb-[3px] pl-[2px] font-['Liberation_Sans',sans-serif] text-[36px] leading-none font-bold tracking-[-1.5px] text-white [text-shadow:0_0_2px_#003b35,1px_1px_2px_#003b35]">
          CONECTAR
        </span>
      </button>
      <svg className="ml-[82px] h-[50px] w-[62px]" viewBox="332 75 62 50" fill="#fff">
        <path d="M333 89H350L369 76V124L350 111H333Z" />
        <path d="M377 94H380V107H377ZM384.500 88H387V113H384.500ZM390 84H393V117H390Z" />
      </svg>
      <svg className="ml-[91px] h-[62px] w-[62px]" viewBox="485 69 62 62" fill="#fff">
        <path d="M535 80.700L497 100L535 119.300" fill="none" stroke="#fff" strokeWidth="8" />
        <circle cx="497.500" cy="100" r="11" />
        <circle cx="535" cy="80.700" r="11" />
        <circle cx="535" cy="119.300" r="11" />
      </svg>
      <svg className="ml-[84px] h-[76px] w-[76px] overflow-visible" viewBox="631 62 76 76">
        <defs>
          <radialGradient id="help" cx="0.75" cy="0.85" r="0.8">
            <stop offset="0" stopColor="#58a6fb" />
            <stop offset="0.5" stopColor="#3475e4" />
            <stop offset="1" stopColor="#2450cf" />
          </radialGradient>
        </defs>
        <circle cx="669" cy="99" r="37" fill="url(#help)" />
        <path d="M632.500 107A37 37 0 1 1 705 91C680 85 650 93 632.500 107Z" fill="#4a6fd8" fillOpacity="0.65" />
        <circle cx="669" cy="99" r="36.500" fill="none" stroke="#2457b8" />
        <path d="M642 74A37 37 0 0 1 690 69" fill="none" stroke="#7b9be6" />
        <text x="669" y="125" textAnchor="middle" fill="#eef0fb" stroke="#eef0fb" strokeWidth="1" fontSize="69" fontWeight="bold" fontFamily="Open Sans, sans-serif">?</text>
      </svg>
    </header>
  )
}

function BatteryLevel() {
  return (
    <svg className="mr-[24px] mb-[4px] ml-auto h-[32px] w-[85px]" viewBox="548 260 85 32">
      <rect x="623" y="271" width="7.500" height="11" rx="1" fill="#777" stroke="#111" strokeWidth="3" />
      <rect x="550" y="263" width="74" height="27" rx="2" fill="#fff" stroke="#111" strokeWidth="4" />
      <path d="M555 268H569V286H555ZM571.500 268H586V286H571.500Z" fill="#ffd600" />
    </svg>
  )
}

function DeviceLine({ address, name }) {
  // the pair digits are set wider than their own font so each takes a full cell
  return (
    <p className="mt-[12px] flex h-[34px] items-baseline justify-center pl-[2px] font-['DejaVu_Sans_Mono',monospace] text-[28.3px] leading-[34px] text-[#00008b] [-webkit-text-stroke:0.4px_#00008b]">
      {address.split(/(:)/).map((part, i) => (
        <span key={i} className={part === ':' ? '' : "font-['Open_Sans','Noto_Sans',sans-serif] text-[28px] tracking-[1.03px] [-webkit-text-stroke:0.8px_#00008b]"}>
          {part}
        </span>
      ))}
      <span className="ml-[17px]">{name}</span>
    </p>
  )
}

function CommandBar() {
  return (
    <div className="mt-auto flex h-[102px] pl-[10px]">
      <div className="flex h-[84px] w-[600px] items-center bg-white pl-[16px]">
        <svg className="mt-[3px] h-[28px] w-[28px]" viewBox="0 0 28 28">
          <path d="M2.500 0H25Q27 0 27 2.500V19.500Q27 22 25 22H6L0.500 27.500V2.500Q0.500 0 2.500 0Z" fill="#26a69a" />
          <path d="M7 9.500H10V12H7ZM12.500 9.500H15.500V12H12.500ZM18 9.500H21V12H18Z" fill="#fff" />
        </svg>
        <span className="ml-[13px] font-['DejaVu_Sans_Mono',monospace] text-[31.6px] leading-none text-[#9e9e9e] [-webkit-text-stroke:0.7px_#9e9e9e]">Digite um comando.</span>
        <svg className="mr-[9px] ml-auto h-[42px] w-[60px]" viewBox="541 1103 60 42" fill="none" stroke="#33b1f3" strokeWidth="4.500">
          <path d="M543 1127L556.500 1140L582 1107.500M566.500 1134.500L572.500 1140L598 1107.500" />
        </svg>
      </div>
      <button type="button" className="ml-[14px] flex h-[82px] w-[82px] items-center justify-center rounded-full bg-[#00897b] pt-[2px] shadow-[0_1px_2px_#0006]">
        <svg className="h-[52px] w-[38px]" viewBox="0 0 38 52" fill="none" stroke="#fff" strokeWidth="4.500">
          <rect x="11.500" y="1" width="15.500" height="31" rx="7" fill="#fff" stroke="none" />
          <path d="M3 24.500C4 35 11 39.500 19.500 39.500S35 35 36 24.500M19.500 39V52.500" />
        </svg>
      </button>
    </div>
  )
}

function NavBar() {
  return (
    <nav className="flex h-[96px] items-center justify-center gap-[160px] bg-black">
      <svg className="h-10 w-10" viewBox="0 0 40 40" fill="none" stroke="#e8e8e8" strokeWidth="3.600" strokeLinejoin="round">
        <path d="M5.500 20L34.200 3.500V36.500Z" />
      </svg>
      <svg className="h-10 w-10" viewBox="0 0 40 40" fill="none" stroke="#e8e8e8" strokeWidth="3.600">
        <circle cx="20" cy="20" r="15.500" />
      </svg>
      <svg className="h-10 w-10" viewBox="0 0 40 40" fill="none" stroke="#e8e8e8" strokeWidth="3.600">
        <rect x="5.800" y="5.800" width="28.400" height="28.400" rx="1" />
      </svg>
    </nav>
  )
}

export default function App() {
  return (
    <div className="flex h-[1280px] w-[720px] flex-col overflow-hidden font-[Roboto,sans-serif]">
      <StatusBar />
      <Toolbar />
      <main className="relative min-h-0 flex-1">
        <Wallpaper />
        <div className="relative flex h-full flex-col border-t border-[#b2f5ee]">
          <div className="mt-[7px] pl-1 text-[24px] leading-[28px] font-bold tracking-[0.03px] whitespace-nowrap text-black">
            <p>Device Developer Android (version 2.1.0.0)</p>
            <p>Copyrights @2014-2017 All rights reserved developer Julio Lima</p>
            <p>(todos os direitos reservados)</p>
          </div>
          <div className="mt-[19px] flex h-[36px] items-center pr-[4px] pl-1 text-[28px] leading-[36px] font-bold tracking-[-0.1px] whitespace-pre text-black">
            <span>Storage:\Users\</span>
            <span className="ml-[15px] text-[#f44336]">paulistacesar</span>
            <span className="ml-[8px]">&gt;</span>
            <BatteryLevel />
            <span>55 %</span>
          </div>
          <DeviceLine address="00:13:04:11:03:61" name="JULIO_BLUETOOTH" />
          <div className="mt-[20px] pl-1 text-[28px] leading-[33px] [word-spacing:0.6px] whitespace-pre text-[#3f51b5] [-webkit-text-stroke:0.8px_#3f51b5]">
            <p>{'Mensagem de Texto Recebida às  16:23:06 .'}</p>
            <p>CONVERSOR HABILITADO</p>
            <p>VELOCIDADE 1 (P124)</p>
            <p className="mt-[33px]">{'Mensagem de Voz Enviada às  16:23:06 .'}</p>
            <p>habilita</p>
          </div>
          <CommandBar />
        </div>
      </main>
      <NavBar />
    </div>
  )
}
